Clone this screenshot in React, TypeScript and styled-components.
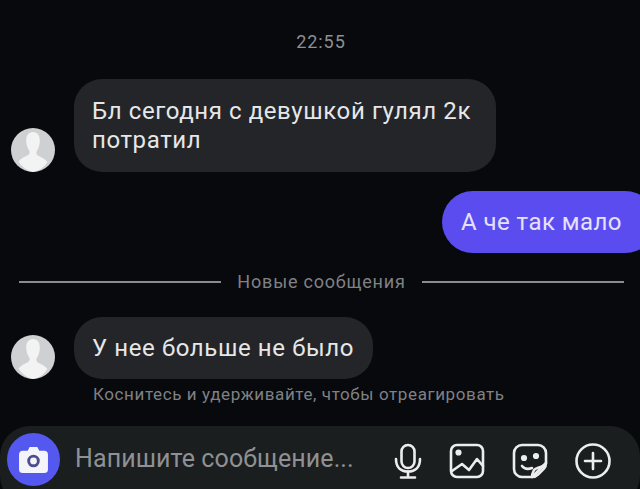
import React from "react";
import styled, { createGlobalStyle } from "styled-components";

const GlobalStyle = createGlobalStyle`
  html, body {
    margin: 0;
    padding: 0;
    background: #07090c;
  }
`;

const Page = styled.div`
  box-sizing: border-box;
  width: 640px;
  height: 489px;
  overflow: hidden;
  background: #07090c;
  font-family: "Roboto", "Liberation Sans", sans-serif;
  display: flex;
  flex-direction: column;
  padding-top: 33px;

  & > * {
    flex-shrink: 0;
  }
`;

const Time = styled.div`
  font-size: 18px;
  line-height: 18px;
  letter-spacing: 0.9px;
  color: #8d8f93;
  text-align: center;
  padding-left: 2px;
  margin-bottom: 28px;
`;

const IncomingRow = styled.div<{ $gap: number }>`
  display: flex;
  align-items: flex-end;
  gap: 19px;
  padding-left: 11px;
  margin-bottom: ${props => props.$gap}px;
`;

const Avatar = styled.svg`
  width: 44px;
  height: 44px;
  flex: none;
  display: block;
`;

const Bubble = styled.div<{ $width: number; $height: number }>`
  box-sizing: border-box;
  width: ${props => props.$width}px;
  height: ${props => props.$height}px;
  background: #232528;
  border-radius: 28px;
  padding: 0 18px;
  color: #e6e7e9;
  font-size: 24px;
  line-height: 29px;
  letter-spacing: 0.6px;
  display: flex;
  align-items: center;
`;

const OutgoingRow = styled.div`
  display: flex;
  justify-content: flex-end;
  margin-bottom: 17px;
`;

const OutgoingBubble = styled.div`
  box-sizing: border-box;
  width: 214px;
  height: 62px;
  margin-right: -16px;
  padding-left: 19px;
  background: #5b4cf0;
  border-radius: 31px;
  color: #e4e2fb;
  font-size: 24px;
  letter-spacing: 0.45px;
  display: flex;
  align-items: center;
`;

const Divider = styled.div`
  display: flex;
  align-items: center;
  gap: 16px;
  height: 24px;
  padding: 0 16px 0 19px;
  margin-bottom: 23px;
`;

const DividerLine = styled.div`
  flex: 1;
  height: 2px;
  background: #8a8b8e;
`;

const DividerLabel = styled.div`
  font-size: 18px;
  letter-spacing: 0.8px;
  color: #7f8185;
  padding-bottom: 2px;
`;

const Hint = styled.div`
  font-size: 17px;
  line-height: 18px;
  letter-spacing: 0.6px;
  color: #7f8185;
  padding-left: 93px;
  margin-bottom: 23px;
`;

const Composer = styled.div`
  box-sizing: border-box;
  height: 80px;
  background: #1b1e1f;
  border-radius: 30px;
  display: flex;
  align-items: flex-start;
  padding: 7px 29px 0 7px;
`;

const CameraButton = styled.div`
  width: 53px;
  height: 53px;
  flex: none;
  border-radius: 50%;
  background: #5458ef;
  display: flex;
  align-items: center;
  justify-content: center;
`;

const Placeholder = styled.div`
  flex: 1;
  margin-left: 15px;
  font-size: 25px;
  line-height: 52px;
  letter-spacing: 0.1px;
  color: #8f9194;
  white-space: nowrap;
`;

const Actions = styled.div`
  display: flex;
  align-items: center;
  gap: 27px;
  height: 53px;
  padding-top: 1px;
`;

const ActionIcon = styled.svg<{ $wide?: boolean }>`
  width: ${props => (props.$wide ? 36 : 28)}px;
  height: 36px;
  display: block;
  fill: none;
  stroke: #eceded;
  stroke-width: 2.6;
  stroke-linecap: round;
  stroke-linejoin: round;
`;

const PersonAvatar = () => (
  <Avatar viewBox="0 0 44 44">
    <circle cx="22" cy="22" r="22" fill="#cfd0d2" />
    <path
      d="M22 4c4.500 0 7 3.500 6.800 9.500-.2 4-1.500 7.500-3 9.500-.8 1-.6 3.500 1 4.500 3 1.600 7 3 9.700 6.500A22 22 0 0 1 22 44 22 22 0 0 1 7.500 33.500c2.700-3.500 6.700-4.900 9.700-6.500 1.600-1 1.800-3.500 1-4.500-1.500-2-2.800-5.500-3-9.500C15 7.500 17.500 4 22 4z"
      fill="#f3f3f4"
    />
  </Avatar>
);

const CameraIcon = () => (
  <svg width="29" height="27" viewBox="0 0 30 28">
    <path
      d="M4 5h5l2-4h8l2 4h5a4 4 0 0 1 4 4v15a4 4 0 0 1-4 4H4a4 4 0 0 1-4-4V9a4 4 0 0 1 4-4z"
      fill="#f4f4fb"
    />
    <circle cx="15" cy="15.500" r="5" fill="none" stroke="#4f4d8e" strokeWidth="3" />
  </svg>
);

const MicIcon = () => (
  <ActionIcon viewBox="0 0 28 36">
    <rect x="7.500" y="2" width="13" height="23" rx="6.500" />
    <path d="M2 16c0 8 4.500 12.500 12 12.500S26 24 26 16" />
    <path d="M14 28.500V34M7 34.500h14" />
  </ActionIcon>
);

const ImageIcon = () => (
  <ActionIcon $wide viewBox="0 0 36 36">
    <rect x="2" y="2" width="32" height="32" rx="6" />
    <circle cx="9.500" cy="9.500" r="1.800" fill="#eceded" />
    <path d="M3 28l10-7 7 6 8-11 6 7" />
  </ActionIcon>
);

const StickerIcon = () => (
  <ActionIcon $wide viewBox="0 0 36 36">
    <path d="M20 34H10a8 8 0 0 1-8-8V10a8 8 0 0 1 8-8h16a8 8 0 0 1 8 8v10z" />
    <path d="M34 20c-2 5-10 4-12 7-1 2-2 5-2 7 1.500 0 4-.5 6-2.500l6-6c1.500-1.500 2-3.500 2-5.500z" />
    <circle cx="12" cy="15" r="1.800" fill="#eceded" />
    <circle cx="24" cy="13" r="1.800" fill="#eceded" />
    <path d="M10 23c2 2.500 6 3.500 10 2" />
  </ActionIcon>
);

const PlusIcon = () => (
  <ActionIcon $wide viewBox="0 0 36 36">
    <circle cx="18" cy="18" r="16.500" />
    <path d="M18 10v16M10 18h16" />
  </ActionIcon>
);

const App = () => {
  return (
    <>
      <GlobalStyle />
      <Page>
        <Time>22:55</Time>
        <IncomingRow $gap={19}>
          <PersonAvatar />
          <Bubble $width={422} $height={93}>
            Бл сегодня с девушкой гулял 2к потратил
          </Bubble>
        </IncomingRow>
        <OutgoingRow>
          <OutgoingBubble>А че так мало</OutgoingBubble>
        </OutgoingRow>
        <Divider>
          <DividerLine />
          <DividerLabel>Новые сообщения</DividerLabel>
          <DividerLine />
        </Divider>
        <IncomingRow $gap={6}>
          <PersonAvatar />
          <Bubble $width={299} $height={62}>
            У нее больше не было
          </Bubble>
        </IncomingRow>
        <Hint>Коснитесь и удерживайте, чтобы отреагировать</Hint>
        <Composer>
          <CameraButton>
            <CameraIcon />
          </CameraButton>
          <Placeholder>Напишите сообщение...</Placeholder>
          <Actions>
            <MicIcon />
            <ImageIcon />
            <StickerIcon />
            <PlusIcon />
          </Actions>
        </Composer>
      </Page>
    </>
  );
};

export default App;
